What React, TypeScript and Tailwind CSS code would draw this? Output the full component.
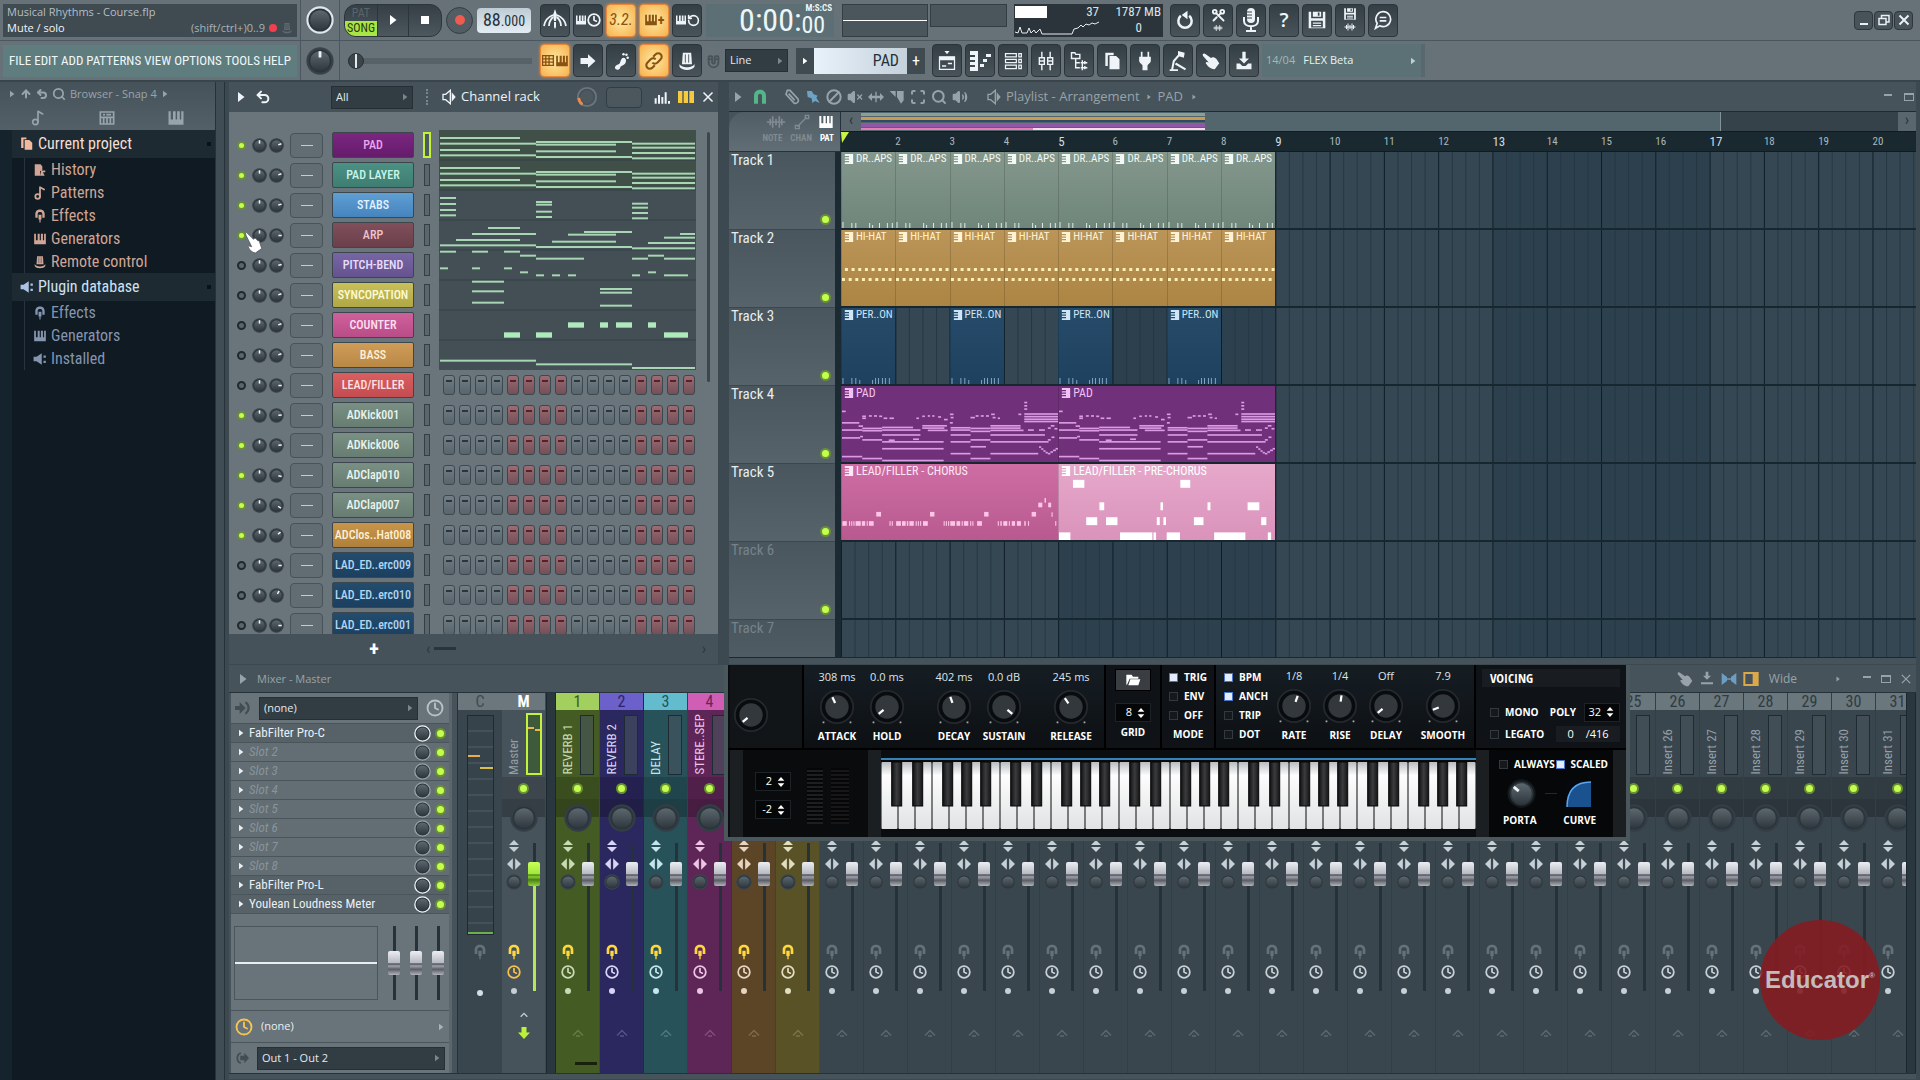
import type { ReactNode } from 'react';
import {
  ArrowUp,
  Ban,
  Clock,
  Magnet,
  Music2,
  RotateCcw,
  Scan,
  Scissors,
  Search,
  Undo2,
  Volume2,
  VolumeX,
} from 'lucide-react';

type Note = [number, number, number];
type Block = [number, number, number, number];

interface Channel {
  name: string;
  on: boolean;
  style: string;
  vol: number;
}

const channels: Channel[] = [
  { name: 'PAD', on: true, style: 'from-[#7a2780] to-[#661b6c] text-[#eba6f0]', vol: 70 },
  { name: 'PAD LAYER', on: true, style: 'from-[#4b9184] to-[#3f7d72] text-[#c9f5ea]', vol: 70 },
  { name: 'STABS', on: true, style: 'from-[#5f9fd4] to-[#4684bd] text-[#e2f2ff]', vol: 75 },
  { name: 'ARP', on: true, style: 'from-[#80505c] to-[#6b3f4a] text-[#eec3cb]', vol: 90 },
  { name: 'PITCH-BEND', on: false, style: 'from-[#7866a4] to-[#65528f] text-[#e7ddff]', vol: 80 },
  { name: 'SYNCOPATION', on: false, style: 'from-[#c9c05a] to-[#b0a745] text-[#fdfbd4]', vol: 70 },
  { name: 'COUNTER', on: false, style: 'from-[#cf609c] to-[#b94d88] text-[#ffe0f2]', vol: 70 },
  { name: 'BASS', on: false, style: 'from-[#cf9d58] to-[#b98845] text-[#fff0d6]', vol: 70 },
  { name: 'LEAD/FILLER', on: false, style: 'from-[#d95f60] to-[#c44c50] text-[#ffe0e0]', vol: 90 },
  { name: 'ADKick001', on: true, style: 'from-[#7b9085] to-[#687d72] text-[#eaf5ee]', vol: 85 },
  { name: 'ADKick006', on: true, style: 'from-[#7b9085] to-[#687d72] text-[#eaf5ee]', vol: 85 },
  { name: 'ADClap010', on: true, style: 'from-[#7b9085] to-[#687d72] text-[#eaf5ee]', vol: 100 },
  { name: 'ADClap007', on: true, style: 'from-[#7b9085] to-[#687d72] text-[#eaf5ee]', vol: 120 },
  { name: 'ADClos..Hat008', on: true, style: 'from-[#c8954a] to-[#b0803a] text-[#fff0d6]', vol: 50 },
  { name: 'LAD_ED..erc009', on: false, style: 'from-[#234c6e] to-[#1c3f5f] text-[#b4d6f0]', vol: 90 },
  { name: 'LAD_ED..erc010', on: false, style: 'from-[#234c6e] to-[#1c3f5f] text-[#b4d6f0]', vol: 30 },
  { name: 'LAD_ED..erc001', on: false, style: 'from-[#234c6e] to-[#1c3f5f] text-[#b4d6f0]', vol: 90 },
];

// start, end, y
const rackNotes: Note[] = [
  [660, 900, 174], [660, 948, 191], [660, 900, 210], [660, 948, 226],
  [948, 1236, 186], [948, 1188, 194], [948, 1188, 214], [948, 1236, 231],
  [1236, 1425, 191], [1236, 1425, 203], [1236, 1425, 219], [1236, 1425, 235],
  [660, 900, 264], [660, 948, 281], [660, 900, 300], [660, 948, 316],
  [948, 1236, 276], [948, 1188, 284], [948, 1188, 304], [948, 1236, 321],
  [1236, 1425, 281], [1236, 1425, 293], [1236, 1425, 309], [1236, 1425, 325],
  [660, 708, 354], [660, 708, 372], [660, 708, 390], [660, 708, 406],
  [948, 996, 366], [948, 996, 374], [948, 996, 395], [948, 996, 411],
  [1236, 1284, 371], [1236, 1284, 383], [1236, 1284, 399], [1236, 1284, 415],
  [804, 900, 444], [756, 948, 462], [708, 900, 480], [660, 948, 496],
  [1092, 1236, 456], [1044, 1188, 464], [996, 1188, 485], [948, 1236, 501],
  [1380, 1425, 462], [1332, 1425, 473], [1284, 1425, 489], [1236, 1425, 505],
  [660, 708, 515], [756, 804, 515], [852, 900, 515], [900, 948, 527], [948, 1092, 536],
  [660, 684, 565], [756, 780, 565], [852, 876, 565], [900, 924, 577], [948, 972, 586],
  [996, 1020, 586], [1044, 1068, 586], [1236, 1284, 536], [1284, 1332, 527],
  [1332, 1425, 536], [1236, 1260, 586], [1284, 1308, 577], [1332, 1404, 586],
  [756, 852, 605], [756, 852, 634], [756, 852, 668],
  [1140, 1236, 627], [1140, 1236, 638], [1140, 1236, 677],
  [660, 948, 842], [948, 1236, 853], [1236, 1425, 864],
];

const counterNotes: Note[] = [
  [852, 900, 765], [948, 996, 765], [1332, 1404, 765],
  [1044, 1092, 735], [1140, 1164, 735], [1188, 1236, 735], [1284, 1308, 735],
];

const padNotes: Note[] = [
  [327, 374, 128], [372, 384, 138], [382, 436, 145], [327, 382, 150], [382, 436, 152],
  [436, 520, 142], [436, 540, 150], [545, 612, 137], [545, 605, 144], [560, 614, 151],
  [327, 376, 174], [376, 384, 170], [382, 436, 180], [436, 540, 165], [436, 603, 186],
  [436, 603, 207], [327, 382, 231], [382, 436, 237], [436, 603, 243],
  [622, 676, 222], [622, 676, 186], [622, 676, 143], [622, 676, 150], [622, 676, 165],
  [676, 730, 237], [676, 718, 201], [676, 730, 180], [676, 730, 145], [676, 730, 154],
  [730, 812, 137], [730, 812, 144], [730, 820, 151], [730, 878, 165], [730, 888, 186],
  [730, 860, 222], [822, 914, 101], [822, 914, 109], [822, 914, 117], [822, 914, 124],
  [327, 337, 93], [382, 392, 108], [382, 392, 114], [400, 408, 107], [414, 422, 107],
  [428, 436, 108], [440, 450, 114], [456, 468, 114], [529, 536, 114], [545, 552, 108],
  [560, 566, 107], [572, 578, 107], [588, 596, 110], [604, 614, 118], [620, 630, 102],
  [622, 630, 112], [676, 688, 112], [690, 698, 107], [704, 712, 107], [718, 726, 107],
  [732, 742, 102], [736, 744, 112], [750, 756, 114], [806, 814, 102], [822, 830, 66],
  [822, 830, 76], [822, 830, 86], [454, 470, 181], [520, 536, 178], [620, 628, 128],
  [832, 848, 150], [862, 878, 150], [886, 894, 144], [894, 904, 137], [904, 912, 146],
  [862, 868, 202], [868, 874, 208], [874, 880, 214], [880, 886, 219], [886, 893, 222],
  [893, 900, 217], [900, 908, 212], [907, 914, 207], [886, 894, 180], [896, 904, 172],
];

const chorusBlocks: Block[] = [
  [328, 423, 12, 14], [346, 423, 3, 14], [352, 423, 3, 14], [358, 423, 3, 14], [364, 423, 14, 14],
  [381, 423, 9, 14], [394, 423, 3, 14], [400, 423, 13, 14], [420, 395, 13, 14],
  [456, 423, 3, 14], [462, 423, 3, 14], [474, 423, 13, 14], [490, 423, 10, 14], [503, 423, 4, 14],
  [510, 423, 12, 14], [527, 423, 3, 14], [533, 423, 3, 14], [539, 423, 3, 14], [547, 423, 13, 14],
  [566, 395, 12, 14], [603, 423, 3, 14], [609, 423, 3, 14], [615, 423, 3, 14], [621, 423, 13, 14],
  [638, 423, 10, 14], [652, 423, 3, 14], [658, 423, 12, 14], [675, 423, 3, 14], [681, 423, 3, 14],
  [694, 423, 13, 14], [713, 395, 12, 14], [750, 423, 3, 14], [757, 423, 4, 14], [765, 423, 11, 14],
  [780, 423, 3, 14], [788, 423, 9, 14], [802, 423, 11, 14], [822, 423, 4, 14], [832, 423, 3, 14],
  [842, 395, 12, 14], [860, 367, 11, 14], [877, 353, 4, 14], [887, 367, 8, 14], [896, 396, 3, 14],
  [906, 423, 3, 14],
];

const preChorusBlocks: Block[] = [
  [952, 298, 31, 24], [1244, 298, 27, 24], [1024, 366, 13, 24], [1190, 366, 7, 24],
  [1318, 366, 8, 24], [1427, 366, 32, 24], [988, 411, 30, 24], [1042, 411, 31, 24],
  [1180, 411, 8, 24], [1198, 411, 7, 24], [1281, 411, 26, 24], [1464, 411, 14, 24],
  [914, 457, 31, 23], [1080, 457, 88, 23], [1171, 457, 7, 23], [1207, 457, 36, 23],
  [1336, 457, 85, 23], [1482, 457, 9, 23],
];

const stripColors: Record<number, { head: string; body: string; icon: string }> = {
  1: { head: 'bg-[#a2cf5e] text-[#3c5a22]', body: 'bg-[#455b24]', icon: 'text-[#c9dbb4]' },
  2: { head: 'bg-[#6c60ca] text-[#2b2468]', body: 'bg-[#2b275f]', icon: 'text-[#d8d4f4]' },
  3: { head: 'bg-[#63bccd] text-[#24525c]', body: 'bg-[#27525a]', icon: 'text-[#c4e6ea]' },
  4: { head: 'bg-[#d15eb5] text-[#672459]', body: 'bg-[#5e2657]', icon: 'text-[#ecc4e4]' },
  5: { head: 'bg-[#cf8b45] text-[#5c3a18]', body: 'bg-[#5c4427]', icon: 'text-[#e6d4c0]' },
  6: { head: 'bg-[#c9bd4c] text-[#57511d]', body: 'bg-[#585226]', icon: 'text-[#e2dec0]' },
};
const stripNames = ['REVERB 1', 'REVERB 2', 'DELAY', 'STERE..SEP'];

function Glyph({ children, className = 'size-5' }: { children: ReactNode; className?: string }) {
  return (
    <svg viewBox="0 0 24 24" className={className} fill="currentColor" stroke="none" aria-hidden="true">
      {children}
    </svg>
  );
}

const Tri = ({ className = 'size-2' }: { className?: string }) => (
  <Glyph className={className}>
    <path d="M6 2 L19 12 L6 22Z" />
  </Glyph>
);

const PianoGlyph = ({ className }: { className?: string }) => (
  <Glyph className={className}>
    <path d="M2 3h3v11h3V3h3.500v11h2V3H17v11h2V3h3v18H2z" />
  </Glyph>
);

const PlugGlyph = ({ className }: { className?: string }) => (
  <Glyph className={className}>
    <path d="M12 1 C6 1 4 5 4 9 V15 H8 V9 C8 6 9.500 5 12 5 S16 6 16 9 V15 H20 V9 C20 5 18 1 12 1Z" />
    <path d="M9.500 10h5v8h-1.500v5h-2v-5H9.500z" />
  </Glyph>
);

const SpeakerGlyph = ({ className }: { className?: string }) => (
  <Glyph className={className}>
    <path d="M3 8h4l7-6v20l-7-6H3z" fill="none" stroke="currentColor" strokeWidth="2" />
    <path d="M16 5v14l6-7z" />
  </Glyph>
);

const PlugSpeaker = ({ className }: { className?: string }) => (
  <Glyph className={className}>
    <path d="M1 8h5l9-6v20l-9-6H1zM18 6h4v4h-4zM18 15h4v4h-4z" />
  </Glyph>
);

const KnobGlyph = ({ className }: { className?: string }) => (
  <Glyph className={className}>
    <path d="M7 2h10l1 14H6z" />
    <path d="M3 15c1 6 17 6 18 0v4c-2 5-16 5-18 0z" />
    <path d="M10 4v10M14 4v10" stroke="#39444b" strokeWidth="1" />
  </Glyph>
);

const HandGlyph = ({ className }: { className?: string }) => (
  <Glyph className={className}>
    <path d="M1 3c1-2 3-1 4 0l7 5c2-2 5-1 7 1l4 6-6 8c-4 0-7-2-9-4l-3-4c0-2 2-2 4-1l-7-8C1 5 1 4 1 3z" />
  </Glyph>
);

const WaveGlyph = ({ className }: { className?: string }) => (
  <Glyph className={className}>
    <path d="M1 12h22M5 8v8M8 5v14M12 8v8M16 5v14M19 8v8" fill="none" stroke="currentColor" strokeWidth="2" />
  </Glyph>
);

const DiskGlyph = ({ className }: { className?: string }) => (
  <Glyph className={className}>
    <path fillRule="evenodd" d="M2 2h3v8h14V2h3v20H2zM5 13v8h14v-8zM7 2h10v6H7zM13 3v4h2V3zM7 15h10v1.500H7zM7 18h10v1.500H7z" />
  </Glyph>
);

interface PickBoxProps {
  label: string;
  value: string;
  width: string;
  className?: string;
}

function PickBox({ label, value, width, className = '' }: PickBoxProps) {
  return (
    <span className={`relative flex h-[23px] shrink-0 items-center ${width} ${className}`}>
      <select
        aria-label={label}
        className="h-full w-full appearance-none border border-[#262f35] bg-[#323c43] px-1 font-['Open_Sans',sans-serif] text-[11px] text-[#e3eaed]"
      >
        <option>{value}</option>
      </select>
      <Tri className="pointer-events-none absolute right-1 size-2 text-[#7a868c]" />
    </span>
  );
}

interface ToolButtonProps {
  label: string;
  active?: boolean;
  children: ReactNode;
}

function ToolButton({ label, active, children }: ToolButtonProps) {
  return (
    <button
      type="button"
      aria-label={label}
      className={`flex h-[33px] w-[30px] shrink-0 items-center justify-center rounded-sm border ${
        active
          ? 'border-[#e9883a] bg-[radial-gradient(#ffe9a0,#f6b14e)] text-[#8a5212] shadow-[0_0_3px_#f08b35]'
          : 'border-[#2a343a] bg-gradient-to-b from-[#333e45] to-[#48535a] text-[#eef4f7]'
      }`}
    >
      {children}
    </button>
  );
}

function Knob({ size, angle, ring = '#39434a' }: { size: string; angle?: number; ring?: string }) {
  return (
    <svg viewBox="0 0 40 40" className={`${size} shrink-0`} aria-hidden="true">
      <defs>
        <linearGradient id="knobFace" x1="0" y1="0" x2="0" y2="1">
          <stop offset="0" stopColor="#5d686e" />
          <stop offset="1" stopColor="#2e383e" />
        </linearGradient>
      </defs>
      <circle cx="20" cy="20" r="18" fill="#2b353b" stroke={ring} strokeWidth="3" />
      <circle cx="20" cy="20" r="14" fill="url(#knobFace)" />
      {angle !== undefined && (
        <path d="M20 6v9" stroke="#eef2f4" strokeWidth="4" transform={`rotate(${angle} 20 20)`} />
      )}
    </svg>
  );
}

function Led({ label, on = true, size = 'size-[11px]' }: { label: string; on?: boolean; size?: string }) {
  return (
    <input
      type="checkbox"
      aria-label={label}
      defaultChecked={on}
      className={`shrink-0 appearance-none rounded-full border-2 border-[#1f292e] bg-[#5b666c] checked:border-[#6a8f35] checked:bg-[#c3ff4f] ${size}`}
    />
  );
}

function TopBar() {
  const menus = ['FILE', 'EDIT', 'ADD', 'PATTERNS', 'VIEW', 'OPTIONS', 'TOOLS', 'HELP'];
  return (
    <header className="border-b-2 border-[#39454b] bg-[#667178]">
      <div className="flex h-[41px] items-center border-b border-[#4b575e]">
        <div className="w-[300px] shrink-0 p-[3px]">
          <div className="h-[33px] bg-[#3f4a51] px-1 font-['Open_Sans',sans-serif] text-[11px] leading-4">
            <p className="text-[#b5bfc5]">Musical Rhythms - Course.flp</p>
            <div className="flex items-center">
              <span className="text-[#f1f5f7]">Mute / solo</span>
              <span className="ml-auto text-[#a9b4ba]">(shift/ctrl+)0..9</span>
              <span className="mx-1 size-2 rounded-full bg-[#ef4050]" />
              <KnobGlyph className="size-3 text-[#5d686f]" />
            </div>
          </div>
        </div>
        <div className="flex h-full w-[40px] shrink-0 items-center justify-center border-x border-[#4b575e]">
          <Knob size="size-[28px]" ring="#dfe7eb" />
        </div>
        <div className="flex w-[200px] shrink-0 items-center pl-1">
          <div className="flex h-[33px] w-[98px] overflow-hidden rounded-xl border border-[#2b353b] bg-gradient-to-b from-[#353f45] to-[#4c575e]">
            <div className="w-8 text-center text-xs">
              <button type="button" className="block h-4 w-full text-[#59646b]">PAT</button>
              <button type="button" className="block h-[15px] w-full bg-[#a8e645] leading-[15px] text-[#26380c]">SONG</button>
            </div>
            <button type="button" aria-label="Play" className="flex w-8 items-center justify-center border-x border-[#2b353b] text-white">
              <Tri className="size-3" />
            </button>
            <button type="button" aria-label="Stop" className="flex flex-1 items-center justify-center">
              <span className="size-2 bg-white" />
            </button>
          </div>
          <button type="button" aria-label="Record" className="ml-1 flex size-[27px] items-center justify-center rounded-full border border-[#333d43] bg-[#515c63]">
            <span className="size-[10px] rounded-full bg-[#ee5b4f]" />
          </button>
          <button type="button" className="ml-1 h-[25px] w-[54px] rounded bg-gradient-to-b from-[#bfccd5] to-[#e3ecf3] text-lg leading-6 text-[#26323a]">
            88<span className="text-sm">.000</span>
          </button>
        </div>
        <div className="flex gap-[3px]">
          <ToolButton label="Metronome">
            <Glyph className="size-6">
              <path d="M12 1l2 6-1 6h-2l-1-6zM11 14h2v5l-1 2-1-2z" />
              <path d="M1 18c1-6 4-9 9-11M23 18c-1-6-4-9-9-11M6 18c0-4 2-7 4-9M18 18c0-4-2-7-4-9" fill="none" stroke="currentColor" strokeWidth="1.800" />
            </Glyph>
          </ToolButton>
          <ToolButton label="Wait for input">
            <PianoGlyph className="size-3" />
            <Clock className="size-[14px]" strokeWidth={3} />
          </ToolButton>
          <ToolButton label="Countdown" active>
            <span className="text-base italic">3.2.</span>
          </ToolButton>
          <ToolButton label="Overdub" active>
            <PianoGlyph className="size-[14px]" />
            <span className="text-sm font-bold">+</span>
          </ToolButton>
          <ToolButton label="Loop recording">
            <PianoGlyph className="size-3" />
            <RotateCcw className="size-[13px]" strokeWidth={3} />
          </ToolButton>
        </div>
        <div className="ml-1 flex h-[33px] w-[128px] shrink-0 justify-end bg-[#5b6f74] pr-[2px] text-[#edf6f7]">
          <span className="text-[32px] leading-8">0:00:</span>
          <span className="flex flex-col">
            <span className="pl-1 text-[9px] leading-[9px] font-bold">M:S:CS</span>
            <span className="text-2xl leading-6">00</span>
          </span>
        </div>
        <div className="ml-2 flex h-[33px] w-[86px] shrink-0 items-center border border-[#333e44] bg-[#4a555c]">
          <div className="h-px w-full bg-white" />
        </div>
        <div className="ml-[2px] h-[33px] w-[77px] shrink-0">
          <div className="h-[23px] border border-[#333e44] bg-[#4a555c]" />
        </div>
        <div className="ml-[7px] grid h-[33px] w-[149px] shrink-0 grid-cols-[84px_1fr] bg-[#2b343b] px-px text-[13px] leading-4 text-[#dbe4e9]">
          <div className="flex h-4 items-center justify-between">
            <div className="h-3 w-8 bg-white" />
            <span>37</span>
          </div>
          <span className="pr-px text-right">1787 MB</span>
          <svg viewBox="0 0 84 16" className="h-4 w-[84px]" fill="none" stroke="#e8eef1" aria-hidden="true">
            <path d="M0 12l3 1 2-6 2 6h5l2-5 2 5 3-3 2 3 4-4 2 5h30l2-5 4-1 3-3 2 2 3-3 3 1 3-2 3 1 4-2" />
          </svg>
          <span className="pr-5 text-right">0</span>
        </div>
        <div className="ml-[7px] flex gap-[3px]">
          <ToolButton label="Undo">
            <Glyph>
              <path d="M7 7a8 8 0 1 0 10 0" fill="none" stroke="currentColor" strokeWidth="3" />
              <path d="M8 6l7-5v10z" />
            </Glyph>
          </ToolButton>
          <ToolButton label="Cut">
            <span className="flex flex-col items-center">
              <Scissors className="size-[15px] rotate-90" strokeWidth={3} />
              <WaveGlyph className="size-[10px]" />
            </span>
          </ToolButton>
          <ToolButton label="Audio recording">
            <Glyph className="size-6">
              <rect x="8" y="0" width="8" height="15" rx="4" />
              <path d="M5 9v4c0 7 14 7 14 0V9M12 18v4M7 23h10" fill="none" stroke="currentColor" strokeWidth="2" />
              <path d="M8 4h5M8 7h5M8 10h5" stroke="#39444b" strokeWidth="1" />
            </Glyph>
          </ToolButton>
          <ToolButton label="Help"><span className="font-['Open_Sans',sans-serif] text-xl font-semibold">?</span></ToolButton>
          <ToolButton label="Save"><DiskGlyph className="size-5" /></ToolButton>
          <ToolButton label="Save new version">
            <span className="flex flex-col items-center">
              <DiskGlyph className="size-[14px]" />
              <WaveGlyph className="size-3" />
            </span>
          </ToolButton>
          <ToolButton label="Project info">
            <Glyph>
              <path d="M12 2a9 9 0 1 1-4 17l-5 3 2-6A9 9 0 0 1 12 2zM8 9h8M8 13h8" fill="none" stroke="currentColor" strokeWidth="2" />
            </Glyph>
          </ToolButton>
        </div>
        <div className="mr-[7px] ml-auto flex gap-px text-[#e9f0f3]">
          <button type="button" aria-label="Minimize" className="flex size-[19px] items-end justify-center rounded-sm border border-[#2d373d] bg-[#475259] pb-1">
            <span className="h-[2px] w-2 bg-current" />
          </button>
          <button type="button" aria-label="Restore" className="flex size-[19px] items-center justify-center rounded-sm border border-[#2d373d] bg-[#475259]">
            <Glyph className="size-3">
              <path d="M2 9h14v12H2zM7 8V3h15v13h-5" fill="none" stroke="currentColor" strokeWidth="3" />
            </Glyph>
          </button>
          <button type="button" aria-label="Close" className="flex size-[19px] items-center justify-center rounded-sm border border-[#2d373d] bg-[#475259]">
            <Glyph className="size-3">
              <path d="M3 3l18 18M21 3L3 21" stroke="currentColor" strokeWidth="4" />
            </Glyph>
          </button>
        </div>
      </div>
      <div className="flex h-[39px] items-center">
        <div className="w-[300px] shrink-0 p-[3px]">
          <nav className="flex h-[32px] items-center justify-between bg-[#5f7c7f] px-[6px] text-[13px] text-[#eef8f8]">
            {menus.map((menu) => (
              <button key={menu} type="button">{menu}</button>
            ))}
          </nav>
        </div>
        <div className="flex h-full w-[40px] shrink-0 items-center justify-center border-x border-[#4b575e]">
          <Knob size="size-[28px]" angle={0} />
        </div>
        <div className="flex w-[200px] shrink-0 items-center px-2">
          <input
            type="range"
            aria-label="Song position"
            defaultValue={0}
            className="h-4 w-full appearance-none bg-[linear-gradient(#566168,#566168)] bg-[length:100%_6px] bg-center bg-no-repeat [&::-webkit-slider-thumb]:h-4 [&::-webkit-slider-thumb]:w-4 [&::-webkit-slider-thumb]:appearance-none [&::-webkit-slider-thumb]:rounded-full [&::-webkit-slider-thumb]:border [&::-webkit-slider-thumb]:border-[#242e34] [&::-webkit-slider-thumb]:bg-[linear-gradient(90deg,#3b464c_44%,#e8e8e8_44%,#e8e8e8_56%,#3b464c_56%)]"
          />
        </div>
        <div className="flex gap-[3px]">
          <ToolButton label="Typing keyboard to piano" active>
            <Glyph className="size-[13px]">
              <path d="M1 3h20v18H1zM1 9h20M1 15h20M7 3v18M13 3v18" fill="none" stroke="currentColor" strokeWidth="2.500" />
            </Glyph>
            <PianoGlyph className="size-[14px]" />
          </ToolButton>
          <ToolButton label="Auto scroll">
            <Glyph className="size-[18px]"><path d="M2 8h10V3l10 9-10 9v-5H2z" /></Glyph>
          </ToolButton>
          <ToolButton label="Step edit">
            <Glyph>
              <path d="M15 8c3 0 4 4 2 7s-5 2-6 5-5 3-6 1 1-4 4-5 2-8 6-8z" />
              <circle cx="15" cy="4" r="1.500" />
              <circle cx="18.500" cy="4.500" r="1.500" />
              <circle cx="20" cy="8" r="1.500" />
            </Glyph>
          </ToolButton>
          <ToolButton label="Note grouping" active>
            <Glyph>
              <path d="M10 14a4 4 0 0 0 6 0l4-4a4 4 0 0 0-6-6l-3 3M14 10a4 4 0 0 0-6 0l-4 4a4 4 0 0 0 6 6l3-3" fill="none" stroke="currentColor" strokeWidth="2.500" />
            </Glyph>
          </ToolButton>
          <ToolButton label="Multilink controllers"><KnobGlyph className="size-5" /></ToolButton>
        </div>
        <Magnet className="mx-1 size-[15px] shrink-0 rotate-[135deg] text-[#485359]" strokeWidth={3} />
        <PickBox label="Snap" value="Line" width="w-[63px]" />
        <div className="ml-2 flex h-[26px] shrink-0">
          <button type="button" aria-label="Pattern menu" className="flex w-[18px] items-center justify-center bg-[#3f4a51] text-white">
            <Tri />
          </button>
          <label htmlFor="pattern" className="sr-only">Pattern</label>
          <input id="pattern" defaultValue="PAD" className="w-[93px] bg-gradient-to-r from-[#e8f2fb] to-[#c5d2db] pr-2 text-right text-base text-[#26323a]" />
          <button type="button" aria-label="Add pattern" className="w-[18px] bg-[#3f4a51] text-base text-white">+</button>
        </div>
        <div className="ml-[7px] flex gap-[3px]">
          <ToolButton label="Playlist">
            <Glyph>
              <path d="M3 7h18v15H3z" fill="none" stroke="currentColor" strokeWidth="1.500" />
              <path d="M9 0h6l-3 4zM3 7h18v4H3zM6 17h5v2H6zM13 14h5v2h-5z" />
            </Glyph>
          </ToolButton>
          <ToolButton label="Piano roll">
            <Glyph className="size-6">
              <path d="M2 2h8v20H2v-4h5v-2H2v-3h5v-2H2V8h5V6H2zM12 15h4v3h-4zM15 10h4v3h-4zM18 5h5v3h-5z" />
            </Glyph>
          </ToolButton>
          <ToolButton label="Channel rack">
            <Glyph>
              <path d="M3 3h13v4H3zM3 10h13v4H3zM3 17h13v4H3zM19 3h3v4h-3zM19 10h3v4h-3zM19 17h3v4h-3z" fill="none" stroke="currentColor" strokeWidth="1.500" />
            </Glyph>
          </ToolButton>
          <ToolButton label="Mixer">
            <Glyph>
              <path d="M7 1v7M17 1v7M7 16v7M17 16v7M4 8h6v8H4zM14 8h6v8h-6zM4 12h6M14 12h6" fill="none" stroke="currentColor" strokeWidth="1.700" />
            </Glyph>
          </ToolButton>
          <ToolButton label="Browser">
            <Glyph>
              <path d="M3 2h4l1 2h5v5H3zM8 9v11h5M8 14h5M14 14h8M14 20h8M16 11v6M19 12v4M16 17v6M19 18v4" fill="none" stroke="currentColor" strokeWidth="1.700" />
            </Glyph>
          </ToolButton>
          <ToolButton label="Project picker">
            <Glyph>
              <path d="M4 2h10v3H7v13H4zM9 6h8l4 4v12H9z" />
            </Glyph>
          </ToolButton>
          <ToolButton label="Plugins">
            <Glyph>
              <path d="M7 1h2v6h6V1h2v6h2v5c0 2-2 3-4 5v6H9v-6c-2-2-4-3-4-5V7h2z" />
            </Glyph>
          </ToolButton>
          <ToolButton label="Tempo tapper">
            <Glyph>
              <path d="M2 23h10M5 22L7 12L14 4M9 15l12 7" fill="none" stroke="currentColor" strokeWidth="2.500" />
              <path d="M12 0l8 2-1 6-7-2z" />
            </Glyph>
          </ToolButton>
          <ToolButton label="Touch controllers"><HandGlyph className="size-[18px]" /></ToolButton>
          <ToolButton label="Update">
            <Glyph>
              <path d="M10 1h4v8h4l-6 6-6-6h4zM3 15h4l3 3h4l3-3h4v7H3z" />
            </Glyph>
          </ToolButton>
        </div>
        <div className="ml-[3px] flex h-[33px] w-[163px] shrink-0 items-center gap-2 border-r-4 border-[#59686d] bg-[#5b7175] px-1 font-['Open_Sans',sans-serif] text-[11px]">
          <span className="text-[#a3b7ba]">14/04</span>
          <a href="#flex" className="text-[#e8f3f3]">FLEX Beta</a>
          <Tri className="ml-auto size-2 text-[#bcd0d2]" />
        </div>
      </div>
    </header>
  );
}

function Browser() {
  const project = [
    { name: 'History', icon: <Glyph className="size-[14px]"><path d="M3 2h10l3 4v6l-4 2v8H3zM14 13h7v3h-4l3 6h-8z" /></Glyph> },
    { name: 'Patterns', icon: <Music2 className="size-[14px]" strokeWidth={3} /> },
    { name: 'Effects', icon: <PlugGlyph className="size-[14px]" /> },
    { name: 'Generators', icon: <PianoGlyph className="size-[14px]" /> },
    { name: 'Remote control', icon: <KnobGlyph className="size-[14px]" /> },
  ];
  const plugins = [
    { name: 'Effects', icon: <PlugGlyph className="size-[14px]" /> },
    { name: 'Generators', icon: <PianoGlyph className="size-[14px]" /> },
    { name: 'Installed', icon: <PlugSpeaker className="size-[14px]" /> },
  ];
  return (
    <aside className="flex w-[216px] shrink-0 flex-col border-r border-[#26323a] bg-[#14232c] text-base">
      <div className="bg-gradient-to-b from-[#465259] to-[#536067] text-[#98a4aa]">
        <div className="flex h-6 items-center gap-1 pl-2 font-['Open_Sans',sans-serif] text-[11px]">
          <Tri />
          <ArrowUp className="size-3" strokeWidth={4} />
          <Undo2 className="size-3" strokeWidth={4} />
          <Search className="size-[14px]" strokeWidth={3} />
          <span>Browser - Snap 4</span>
          <Tri />
        </div>
        <div className="flex h-6 items-center justify-between px-[30px]">
          <Music2 className="size-4" strokeWidth={2.5} />
          <Glyph className="size-4">
            <path d="M2 3h20v18H2zM2 11h20M7 11v10M12 11v10M17 11v10M6 7h3M11 7h7" fill="none" stroke="currentColor" strokeWidth="2.500" />
          </Glyph>
          <PianoGlyph className="size-[18px]" />
        </div>
      </div>
      <div className="ml-3 flex-1 bg-[#0f1a22]">
        <h2 className="flex h-7 items-center gap-1 bg-[#1e2a32] pl-2 text-[#f3ded3]">
          <Glyph className="size-[14px] text-[#f0b9a0]"><path d="M2 1h9v3H6v15H2zM8 5h8l5 5v12H8z" /></Glyph>
          Current project
          <span className="mr-1 ml-auto size-1 bg-[#0a1218]" />
        </h2>
        <ul className="ml-3 border-l border-[#26353f] text-[#d1a596]">
          {project.map((item) => (
            <li key={item.name} className="flex h-[23px] items-center gap-1 pl-2">
              {item.icon}
              {item.name}
            </li>
          ))}
        </ul>
        <h2 className="flex h-7 items-center gap-1 bg-[#1e2a32] pl-2 text-[#cfe2f3]">
          <PlugSpeaker className="size-[14px] text-[#a9c4e6]" />
          Plugin database
          <span className="mr-1 ml-auto size-1 bg-[#0a1218]" />
        </h2>
        <ul className="ml-3 border-l border-[#26353f] text-[#8595b0]">
          {plugins.map((item) => (
            <li key={item.name} className="flex h-[23px] items-center gap-1 pl-2">
              {item.icon}
              {item.name}
            </li>
          ))}
        </ul>
      </div>
    </aside>
  );
}

function RackNotes() {
  return (
    <svg viewBox="657 150 771 720" className="h-[240px] w-[257px] bg-[#434f55]" aria-hidden="true">
      <rect x="657" y="150" width="771" height="180" fill="#405048" />
      {[1, 2, 3, 4, 5, 6, 7].map((row) => (
        <rect key={row} x="657" y={148 + row * 90} width="771" height="4" fill="#37444a" />
      ))}
      {rackNotes.map(([start, end, y]) => (
        <rect key={`${start}-${y}`} x={start} y={y - 3} width={end - start} height="6" fill="#a8d5b4" />
      ))}
      {counterNotes.map(([start, end, y]) => (
        <rect key={`${start}-${y}`} x={start} y={y - 8} width={end - start} height="16" fill="#aeeabc" />
      ))}
    </svg>
  );
}

function ChannelRow({ channel, index }: { channel: Channel; index: number }) {
  return (
    <div className="flex h-[30px] items-center">
      <Led label={`Mute ${channel.name}`} on={channel.on} size="size-[9px]" />
      <div className="ml-[6px] flex gap-[2px]">
        <Knob size="size-[15px]" angle={0} />
        <Knob size="size-[15px]" angle={channel.vol} />
      </div>
      <button type="button" aria-label={`Mixer track for ${channel.name}`} className="ml-[6px] flex h-[25px] w-[33px] items-center justify-center rounded-sm border border-[#485359] bg-[#626d73]">
        <span className="h-px w-3 bg-[#c3ccd1]" />
      </button>
      <button type="button" className={`ml-[9px] h-[26px] w-[82px] rounded-xs border border-[#3c474d] bg-gradient-to-b text-xs font-medium whitespace-nowrap ${channel.style}`}>
        {channel.name}
      </button>
      <span className={index === 0 ? 'ml-[9px] h-[26px] w-2 border-2 border-[#c2f23c] bg-[#4f5a60]' : 'mr-px ml-[10px] h-[22px] w-[6px] border border-[#343f45] bg-[#5b666c]'} />
      {index > 7 && (
        <div className="ml-3 flex gap-1">
          {Array.from({ length: 16 }, (_, step) => (
            <button
              key={step}
              type="button"
              aria-label={`Step ${step + 1}`}
              className={`flex h-5 w-3 justify-center rounded-[3px] border border-[#3d484e] bg-gradient-to-b pt-1 ${
                Math.floor(step / 4) % 2 ? 'from-[#9b6d74] to-[#744f57]' : 'from-[#737f86] to-[#58646b]'
              }`}
            >
              <span className={`h-[2px] w-[6px] ${Math.floor(step / 4) % 2 ? 'bg-[#5a1f28]' : 'bg-[#2b363c]'}`} />
            </button>
          ))}
        </div>
      )}
    </div>
  );
}

function ChannelRack() {
  return (
    <section className="flex w-[497px] shrink-0 flex-col border-x-4 border-[#3d4950] bg-[#465259]">
      <div className="flex h-[30px] shrink-0 items-center pl-[6px] text-[#eef4f7]">
        <Tri className="size-3" />
        <Undo2 className="ml-2 size-4" strokeWidth={3} />
        <PickBox label="Channel filter" value="All" width="w-[82px]" className="ml-[60px]" />
        <span className="mx-[13px] h-4 border-l-2 border-dotted border-[#7a868c]" />
        <SpeakerGlyph className="size-4" />
        <h2 className="ml-1 font-['Open_Sans',sans-serif] text-[13px]">Channel rack</h2>
        <div className="ml-auto flex items-center gap-2 pr-1">
          <svg viewBox="0 0 24 24" className="size-[22px]" aria-hidden="true">
            <circle cx="12" cy="12" r="10" fill="none" stroke="#6a757b" strokeWidth="2" />
            <circle cx="12" cy="12" r="7" fill="#4d585f" />
            <path d="M3 13a9 9 0 0 0 4 7" fill="none" stroke="#f08a4a" strokeWidth="3" />
          </svg>
          <span className="h-[21px] w-9 rounded border border-[#323d43] bg-[#4b565d]" />
          <Glyph className="ml-1 size-4">
            <path d="M1 14h3v8H1zM6 9h3v13H6zM11 12h3v10h-3zM16 5h3v17h-3zM21 18h3v4h-3z" />
          </Glyph>
          <Glyph className="size-4 text-[#f6ca3b]">
            <path d="M0 3h6.500v18H0zM8.500 3H15v18H8.500zM17 3h7v18h-7z" />
          </Glyph>
          <button type="button" aria-label="Close channel rack">
            <Glyph className="size-3"><path d="M3 3l18 18M21 3L3 21" stroke="currentColor" strokeWidth="3" /></Glyph>
          </button>
        </div>
      </div>
      <div className="relative h-[522px] overflow-hidden bg-[#6a757b] pt-[18px] pl-2">
        {channels.map((channel, index) => (
          <ChannelRow key={channel.name} channel={channel} index={index} />
        ))}
        <div className="absolute top-[18px] left-[210px]">
          <RackNotes />
        </div>
        <div className="absolute top-[20px] right-2 h-[250px] w-[3px] rounded bg-[#3b464d]" />
        <svg viewBox="0 0 20 24" className="absolute top-[120px] left-[15px] h-[22px] w-[19px]" fill="#fff" stroke="#5a6066" aria-hidden="true">
          <path d="M1 1c1-1 2 0 3 1l6 6c1-2 3-1 4 1 1 0 3 1 3 3l2 6-7 5c-4-1-6-3-8-7 0-1 1-1 4 0L2 4z" />
        </svg>
      </div>
      <div className="flex h-[29px] items-center text-[#48545a]">
        <button type="button" aria-label="Add channel" className="ml-[137px] w-4 text-xl leading-5 font-bold text-white">+</button>
        <span className="ml-11 text-[#2b363c]">‹</span>
        <div className="ml-1 h-[3px] w-[22px] bg-[#2a343a]" />
        <span className="mr-3 ml-auto text-[#2b363c]">›</span>
      </div>
    </section>
  );
}

interface ClipProps {
  name: string;
  style: string;
  wide?: boolean;
  children?: ReactNode;
}

function Clip({ name, style, wide, children }: ClipProps) {
  return (
    <div className={`flex min-w-0 flex-col overflow-hidden border-l border-black/15 ${wide ? 'col-span-4 text-xs' : 'text-[11px]'} ${style}`}>
      <div className="flex h-[14px] shrink-0 items-center gap-[2px] pl-[2px] leading-[14px] whitespace-nowrap">
        <Glyph className="size-[10px] shrink-0">
          <path d="M2 0h20v24H2v-4h10v-3H2v-3h10v-3H2V8h10V5H2z" />
        </Glyph>
        {name}
      </div>
      {children}
    </div>
  );
}

function ClipSvg({ box, children }: { box: string; children: ReactNode }) {
  return (
    <svg viewBox={box} preserveAspectRatio="none" className="-mt-[14px] h-[76px] w-full" fill="currentColor" aria-hidden="true">
      {children}
    </svg>
  );
}

const eight = [0, 1, 2, 3, 4, 5, 6, 7];

function Playlist() {
  const tools = [
    <Glyph key="draw" className="size-4"><path d="M5 2l4 0 12 13c2 4-2 8-6 6L3 8zM7 7l9 10" fill="none" stroke="currentColor" strokeWidth="2.500" /></Glyph>,
    <Glyph key="paint" className="size-4 text-[#6fa3c4]"><path d="M3 3h7l3 5 6 2-2 3 5 8-7-3-4 3-1-7-6-2z" /></Glyph>,
    <Ban key="delete" className="size-4 rotate-90" strokeWidth={3} />,
    <VolumeX key="mute" className="size-4 fill-current" />,
    <Glyph key="slip" className="size-4"><path d="M0 12l6-6v4h12V6l6 6-6 6v-4H6v4zM11 4h2v16h-2z" /></Glyph>,
    <Glyph key="slice" className="size-4"><path d="M1 3h9v9zM12 3h10v14l-4 5-6-10z" /></Glyph>,
    <Scan key="select" className="size-4" strokeWidth={3} />,
    <Search key="zoom" className="size-4" strokeWidth={3} />,
    <Volume2 key="play" className="size-4 fill-current" />,
  ];
  return (
    <section className="flex min-w-0 flex-1 flex-col border-r-4 border-l-[7px] border-[#3d4950] bg-[#47535a]">
      <div className="flex h-[29px] shrink-0 items-center pl-[3px] text-[#97a3a9]">
        <Tri className="size-3" />
        <Glyph className="ml-2 size-4 text-[#53b588]"><path d="M3 22V10C3-2 21-2 21 10v12h-6V10c0-4-6-4-6 0v12z" /></Glyph>
        <div className="ml-4 flex gap-[5px]">{tools}</div>
        <SpeakerGlyph className="ml-[18px] size-4" />
        <h2 className="ml-1 font-['Open_Sans',sans-serif] text-[13px]">Playlist - Arrangement</h2>
        <Tri className="mx-[6px] size-[6px]" />
        <span className="font-['Open_Sans',sans-serif] text-[13px]">PAD</span>
        <Tri className="ml-2 size-[6px]" />
        <div className="mr-[2px] ml-auto flex items-center gap-3">
          <span className="mb-1 h-[2px] w-2 bg-current" />
          <span className="h-2 w-[10px] border border-t-2 border-current" />
        </div>
      </div>
      <div className="flex border-t border-[#1f2b31]">
        <div className="h-10 w-[112px] shrink-0 rounded-tl-2xl border-r border-b border-[#26323a] bg-gradient-to-b from-[#515d64] to-[#626e75] px-[6px] text-[#7f8b91]">
          <div className="flex h-5 items-center justify-end gap-2">
            <WaveGlyph className="size-5" />
            <Glyph className="size-4"><path d="M5 19L19 5M2 17h6v5H2zM17 2h5v5h-5z" fill="none" stroke="currentColor" strokeWidth="2" /></Glyph>
            <PianoGlyph className="size-4 text-white" />
          </div>
          <div className="flex justify-end gap-2 text-[9px] font-bold">
            <span>NOTE</span>
            <span>CHAN</span>
            <span className="text-white">PAT</span>
          </div>
        </div>
        <div className="min-w-0 flex-1">
          <div className="flex h-[19px] bg-[#36424a]">
            <div className="w-5 shrink-0 bg-[#59666d] text-center leading-4 text-[#26323a]">‹</div>
            <div className="w-[80%] border-r border-[#82949a] bg-[#53666d]">
              <div className="flex h-full w-[40%] flex-col justify-evenly">
                <div className="h-[3px] bg-[#8ba094]" />
                <div className="h-[3px] bg-[#c99a52]" />
                <div className="h-[2px] bg-[#2c4d6a]" />
                <div className="h-[4px] bg-[#8f57a8]" />
                <div className="h-[2px] bg-gradient-to-r from-[#e57db7] from-50% to-[#fbd8ea] to-50%" />
              </div>
            </div>
            <div className="ml-auto w-[18px] shrink-0 bg-[#59666d] text-center leading-4 text-[#26323a]">›</div>
          </div>
          <div className="h-[21px] overflow-hidden border-y border-[#101c22] bg-[#1a2930]">
            <div className="grid h-full w-[101%] grid-cols-20 text-[11px] leading-5 text-[#a9b8be]">
              {Array.from({ length: 20 }, (_, bar) =>
                bar === 0 ? (
                  <span key={bar}>
                    <Glyph className="size-3 text-[#c8f545]"><path d="M0 0h16L2 22z" /></Glyph>
                  </span>
                ) : (
                  <span key={bar} className={bar % 4 === 0 ? 'text-[13px] text-[#cfdce1]' : ''}>
                    {bar + 1}
                  </span>
                ),
              )}
            </div>
          </div>
        </div>
      </div>
      <div className="flex h-[505px] overflow-hidden">
        <div className="w-[112px] shrink-0 border-r-[6px] border-[#1c2b33] bg-[#515d64]">
          {[1, 2, 3, 4, 5, 6, 7].map((track) => (
            <div key={track} className="flex h-[78px] flex-col justify-between border-b border-[#3c484f] bg-gradient-to-b from-[#4a565d] to-[#57636a] pr-[4px] pb-1 pl-[2px]">
              <span className={track < 6 ? 'text-[15px] leading-4 text-[#e7edf0]' : 'text-[15px] leading-4 text-[#76828a]'}>Track {track}</span>
              <span className="flex self-end">
                <Led label={`Mute track ${track}`} />
              </span>
            </div>
          ))}
        </div>
        <div className="min-w-0 flex-1 overflow-hidden">
          <div className="relative w-[101%]">
            <svg width="100%" height="546" className="block" aria-hidden="true">
              <rect width="100%" height="546" fill="#354753" />
              <rect x="20%" width="20%" height="546" fill="#2c404d" />
              <rect x="60%" width="20%" height="546" fill="#2c404d" />
              {Array.from({ length: 80 }, (_, beat) => (
                <rect key={beat} x={`${beat * 1.25}%`} width="1" height="546" fill={beat % 4 ? '#263844' : '#0f1f29'} />
              ))}
              {[1, 2, 3, 4, 5, 6].map((row) => (
                <rect key={row} y={row * 78 - 2} width="100%" height="2" fill="#172730" />
              ))}
            </svg>
            <div className="absolute inset-0 grid auto-rows-[76px] grid-cols-20 gap-y-[2px]">
              {eight.map((bar) => (
                <Clip key={bar} name="DR..APS" style="bg-gradient-to-b from-[#84978c] to-[#70867b] text-[#f3faf6]">
                  <ClipSvg box="0 0 54 76">
                    <path d="M1 70v6M10 71v5M14 71v5M28 71v5M31 73v3M38 71v5M46 71v5M51 71v5" stroke="#dcebe2" />
                  </ClipSvg>
                </Clip>
              ))}
              <div className="col-span-12" />
              {eight.map((bar) => (
                <Clip key={bar} name="HI-HAT" style="bg-gradient-to-b from-[#bb9558] to-[#ac8544] text-[#fff3d6]">
                  <ClipSvg box="0 0 54 76">
                    {eight.map((hit) => (
                      <path key={hit} d={`M${3 + hit * 6.75} 38h3v3h-3zM${hit * 6.75} 48h3v3h-3z`} fill="#fff0b8" />
                    ))}
                  </ClipSvg>
                </Clip>
              ))}
              <div className="col-span-12" />
              {[0, 1, 2, 3].map((pair) => (
                <div key={pair} className="col-span-2 grid grid-cols-2">
                  <Clip name="PER..ON" style="bg-gradient-to-b from-[#264b69] to-[#1f4160] text-[#cfe6f6]">
                    <ClipSvg box="0 0 54 76">
                      <path d="M1 70v6M10 70v6M14 70v6M18 72v4M31 72v4M34 70v6M37 70v6M41 70v6M44 70v6M48 70v6" stroke="#7fa6c4" />
                    </ClipSvg>
                  </Clip>
                </div>
              ))}
              <div className="col-span-12" />
              {[0, 1].map((half) => (
                <Clip key={half} name="PAD" wide style="bg-[#70317a] text-[#f1c3f5]">
                  <ClipSvg box="327 15 587 232">
                    {padNotes.map(([start, end, y]) => (
                      <rect key={`${start}-${y}`} x={start} y={y - 3} width={end - start} height="5" fill="#dd9be6" />
                    ))}
                  </ClipSvg>
                </Clip>
              ))}
              <div className="col-span-12" />
              <Clip name="LEAD/FILLER - CHORUS" wide style="bg-gradient-to-b from-[#cd6da3] to-[#b85a90] text-[#ffe6f4]">
                <ClipSvg box="327 250 587 230">
                  {chorusBlocks.map(([x, y, w, h]) => (
                    <rect key={`${x}-${y}`} x={x} y={y} width={w} height={h} fill="#ffc4e6" />
                  ))}
                </ClipSvg>
              </Clip>
              <Clip name="LEAD/FILLER - PRE-CHORUS" wide style="bg-gradient-to-b from-[#e6a8cb] to-[#da93bb] text-white">
                <ClipSvg box="914 250 588 230">
                  {preChorusBlocks.map(([x, y, w, h]) => (
                    <rect key={`${x}-${y}`} x={x} y={y} width={w} height={h} fill="#ffffff" />
                  ))}
                </ClipSvg>
              </Clip>
            </div>
          </div>
        </div>
      </div>
      <div className="h-[7px] border-t border-[#1c282e]" />
    </section>
  );
}

interface FaderProps {
  label: string;
  value: number;
  size: string;
  green?: boolean;
}

function Fader({ label, value, size, green }: FaderProps) {
  return (
    <input
      type="range"
      aria-label={label}
      defaultValue={value}
      className={`appearance-none bg-[length:3px_100%] bg-center bg-no-repeat [direction:rtl] [writing-mode:vertical-lr] [&::-webkit-slider-thumb]:h-6 [&::-webkit-slider-thumb]:w-3 [&::-webkit-slider-thumb]:appearance-none [&::-webkit-slider-thumb]:rounded-xs ${size} ${
        green
          ? 'bg-[linear-gradient(#26323a_22%,#b2e85a_22%)] [&::-webkit-slider-thumb]:bg-[linear-gradient(#c8ff5a_0,#a4e83c_48%,#4e8518_54%,#86cf2c_62%,#4b7d1c_74%,#8ed92f)]'
          : 'bg-[linear-gradient(#26323a,#26323a)] [&::-webkit-slider-thumb]:bg-[linear-gradient(#eceef2_0,#b9bbc4_48%,#50525a_54%,#a0a2ab_62%,#5b5d66_76%,#b2b4bc)]'
      }`}
    />
  );
}

interface StripProps {
  name: string;
  number: string;
  head: string;
  body: string;
  icon: string;
  linked?: boolean;
  master?: boolean;
}

function Strip({ name, number, head, body, icon, linked, master }: StripProps) {
  return (
    <div className={`flex w-11 shrink-0 flex-col border-r border-black/10 ${body} ${icon}`}>
      <div className={`h-[17px] text-center text-base leading-[17px] ${head}`}>{number}</div>
      <div className="flex h-[67px] items-end pb-[2px]">
        <span className={`w-6 rotate-180 text-[13px] leading-6 whitespace-nowrap [writing-mode:vertical-rl] ${linked && !master ? '' : 'text-[#939fa5]'}`}>{name}</span>
        <span className={master ? 'flex h-[62px] w-4 items-start gap-px border-2 border-[#c2f23c] bg-[#3f5a3a] pt-3' : 'h-[60px] w-[14px] border border-[#1f2b33] bg-[#47535b]/60'}>
          {master && (
            <>
              <span className="h-[2px] flex-1 bg-[#eab54e]" />
              <span className="mt-[2px] h-[2px] flex-1 bg-[#eab54e]" />
            </>
          )}
        </span>
      </div>
      <div className="flex h-[22px] items-center justify-center bg-black/15">
        <Led label={`Mute ${name}`} />
      </div>
      <div className="flex h-[37px] items-center justify-center bg-gradient-to-b from-black/25 from-50% to-transparent to-50%">
        <Knob size="size-7" ring="#333e46" />
      </div>
      <div className="flex h-[163px]">
        <div className="flex w-6 flex-col items-center">
          <Glyph className="my-1 size-3"><path d="M12 0l10 10H2zM12 24l10-10H2z" /></Glyph>
          <Glyph className="my-px size-[14px]"><path d="M0 12L10 2v20zM24 12L14 2v20z" /></Glyph>
          <span className="my-[2px] flex"><Knob size="size-4" ring="#3a464e" /></span>
          <PlugGlyph className={`mt-[52px] size-4 ${linked ? 'text-[#ffd83f]' : 'text-[#66727a]'}`} />
          <Clock className={`mt-[5px] size-[14px] ${master ? 'text-[#f4c04d]' : ''}`} strokeWidth={3} />
          <span className="mt-[9px] size-[6px] rounded-full bg-current" />
        </div>
        <div className="pt-[7px]">
          <Fader label={`${name} level`} value={85} size="h-[148px] w-4" green={master} />
        </div>
      </div>
      <div className="flex flex-1 flex-col items-center gap-2">
        {master ? (
          <>
            <Glyph className="mt-3 size-2"><path d="M2 17L12 7l10 10" fill="none" stroke="currentColor" strokeWidth="4" /></Glyph>
            <Glyph className="size-3 text-[#b9f23c]"><path d="M7 0h10v11h7L12 24 0 11h7z" /></Glyph>
          </>
        ) : (
          <Glyph className="mt-7 size-3 opacity-25"><path d="M2 17L12 7l10 10M8 18h8" fill="none" stroke="currentColor" strokeWidth="3" /></Glyph>
        )}
      </div>
    </div>
  );
}

function EffectRack() {
  const slots = ['FabFilter Pro-C', 'Slot 2', 'Slot 3', 'Slot 4', 'Slot 5', 'Slot 6', 'Slot 7', 'Slot 8', 'FabFilter Pro-L', 'Youlean Loudness Meter'];
  return (
    <div className="flex w-[221px] shrink-0 flex-col border-r-[3px] border-[#5a656c] bg-[#68737a] text-[#e9eff2]">
      <div className="flex h-[30px] items-center gap-2 pl-1">
        <Glyph className="size-4 text-[#414c53]"><path d="M0 9h7V3l9 9-9 9v-6H0zM16 2c8 4 8 16 0 20l-1-3c5-3 5-11 0-14z" /></Glyph>
        <PickBox label="Mixer input" value="(none)" width="w-[159px]" />
        <Clock className="size-[18px] text-[#b7c1c6]" strokeWidth={2.5} />
      </div>
      <ul>
        {slots.map((slot) => {
          const empty = slot.startsWith('Slot');
          return (
            <li key={slot} className={`flex h-[19px] items-center border-t border-[#49545b] pr-[3px] pl-[6px] text-[13px] ${empty ? 'bg-[#626d74]' : 'bg-[#566168]'}`}>
              <Tri />
              <span className={empty ? 'ml-1 text-[#89949a] italic' : 'ml-1'}>{slot}</span>
              <span className="mr-1 ml-auto flex">
                <Knob size="size-[17px]" ring={empty ? '#98a4aa' : '#f3f7f9'} />
              </span>
              <Led label={`Enable ${slot}`} />
            </li>
          );
        })}
      </ul>
      <div className="flex items-center gap-2 border-t border-[#49545b] px-[3px] pt-3 pb-[10px]">
        <div className="flex h-[74px] w-[145px] items-center border border-[#4a555c]">
          <div className="h-[2px] w-full bg-[#e8eef1]" />
        </div>
        <div className="flex gap-[6px]">
          {['Low', 'Mid', 'High'].map((band) => (
            <Fader key={band} label={`${band} band`} value={50} size="h-[74px] w-4" />
          ))}
        </div>
      </div>
      <div className="flex h-[32px] items-center gap-2 border-t border-[#49545b] px-1 font-['Open_Sans',sans-serif] text-[11px]">
        <Clock className="size-[18px] text-[#f5c451]" strokeWidth={2.5} />
        (none)
        <Tri className="ml-auto size-2 text-[#a9b4ba]" />
      </div>
      <div className="flex h-[31px] items-center gap-2 border-t border-[#49545b] px-1">
        <Glyph className="size-4 text-[#414c53]"><path d="M10 2C0 3 0 21 10 22v-3C4 18 4 6 10 5zM9 8h7V3l8 9-8 9v-5H9z" /></Glyph>
        <PickBox label="Mixer output" value="Out 1 - Out 2" width="w-[188px]" />
      </div>
    </div>
  );
}

function Mixer() {
  return (
    <section className="relative border-x-4 border-t border-[#3d4950] bg-[#47535a]">
      <div className="flex h-[27px] items-center pt-px pl-2 font-['Open_Sans',sans-serif] text-xs text-[#97a3a9]">
        <Tri className="size-3" />
        <h2 className="ml-2 text-[11px]">Mixer - Master</h2>
        <div className="ml-auto flex items-center gap-[6px] pr-[5px]">
          <HandGlyph className="size-4" />
          <Glyph className="size-4"><path d="M10 1h4v6h4l-6 6-6-6h4zM3 17h18v3H3z" /></Glyph>
          <Glyph className="size-4 text-[#6c9dc2]"><path d="M1 3l8 6v6l-8 6zM23 3l-8 6v6l8 6zM9 11h6v2H9z" /></Glyph>
          <Glyph className="size-4 text-[#dba94c]"><path d="M2 3h20v18H2zM16 3v18M19 3v18" fill="none" stroke="currentColor" strokeWidth="3" /></Glyph>
          <span className="ml-1">Wide</span>
          <Tri className="mr-4 ml-8 size-[6px]" />
          <span className="mb-1 h-[2px] w-2 bg-current" />
          <span className="mx-1 h-2 w-[10px] border border-t-2 border-current" />
          <Glyph className="size-[10px]"><path d="M2 2l20 20M22 2L2 22" stroke="currentColor" strokeWidth="3" /></Glyph>
        </div>
      </div>
      <div className="flex border-t border-[#26323a] pl-[2px]">
        <EffectRack />
        <div className="ml-[5px] flex min-w-0 flex-1 border-l border-[#26323a] bg-[#3a464e]">
          <div className="flex w-11 shrink-0 flex-col items-center text-[#66727a]">
            <div className="h-[17px] w-full bg-[#6b767d] text-center text-base leading-[17px] text-[#3f4a51]">C</div>
            <div className="mt-[5px] flex h-[220px] w-[27px] flex-col justify-between border border-[#1f2b33] bg-[repeating-linear-gradient(#36434b_0,#36434b_14px,#44515a_14px,#44515a_16px)]">
              <div className="flex pt-[39px]">
                <span className="h-[2px] w-1/2 bg-[#e9ae4a]" />
                <span className="mt-3 h-[2px] w-1/2 bg-[#d8c04a]" />
              </div>
              <span className="h-[2px] bg-[#6fae4c]" />
            </div>
            <PlugGlyph className="mt-[9px] size-4" />
            <span className="mt-[30px] size-[6px] rounded-full bg-[#d5dde1]" />
          </div>
          <Strip name="Master" number="M" head="bg-[#6b767d] font-bold text-white" body="bg-[#47535a]" icon="text-[#c4ced3]" linked master />
          <div className="w-[10px] shrink-0 border-x border-[#1c282f] bg-[#2b373f]" />
          <div className="relative flex min-w-0 flex-1 overflow-hidden">
            {Array.from({ length: 31 }, (_, i) => {
              const n = i + 1;
              const color = stripColors[n] ?? { head: 'bg-[#6a777d] text-[#2f3a41]', body: 'bg-[#3a464e]', icon: 'text-[#c6d0d5]' };
              return <Strip key={n} name={stripNames[i] ?? `Insert ${n}`} number={String(n)} linked={n < 7} {...color} />;
            })}
            <div className="absolute bottom-2 left-[19px] h-[3px] w-[22px] bg-[#17210c]" />
          </div>
          <div className="w-[10px] shrink-0 border-x border-[#1c282f] bg-[#2b373f]" />
        </div>
      </div>
      <div className="h-[6px] border-t border-[#26323a]" />
      <FlexSynth />
      <div className="absolute right-[36px] bottom-[39px] flex size-[120px] items-center justify-center rounded-full bg-[#851c22]/90 font-['Liberation_Sans',sans-serif] text-2xl font-bold text-[#c3bcbd]">
        Educator<span className="mb-2 text-[8px]">®</span>
      </div>
    </section>
  );
}

function SynthKnob({ label, value, angle }: { label: string; value: string; angle: number }) {
  return (
    <div className="flex w-[46px] shrink-0 flex-col items-center text-[11px]">
      <span className="whitespace-nowrap text-[#dde3e8]">{value}</span>
      <svg viewBox="0 0 40 40" className="my-[3px] size-9" aria-hidden="true">
        <circle cx="20" cy="20" r="18" fill="#090c0f" stroke="#25292d" strokeWidth="2" />
        <circle cx="20" cy="20" r="13" fill="#33383d" />
        <path d="M20 8v7" stroke="#fff" strokeWidth="2.500" transform={`rotate(${angle} 20 20)`} />
        <path d="M4 37h2M34 37h2" stroke="#aaa" strokeWidth="2" />
      </svg>
      <span className="text-[10px] leading-4 font-bold text-white">{label}</span>
    </div>
  );
}

function Check({ label, on }: { label: string; on?: boolean }) {
  return (
    <label className="flex h-[19px] items-center gap-[6px] text-[10px] font-bold text-white">
      <input type="checkbox" defaultChecked={on} className="size-[9px] appearance-none border border-[#33393e] bg-[#15191c] checked:border-[#4a75c9] checked:bg-[#e3edff]" />
      {label}
    </label>
  );
}

function Stepper({ value, label }: { value: string; label: string }) {
  return (
    <button type="button" aria-label={label} className="flex h-[19px] w-9 items-center justify-end gap-1 border border-[#1d2226] bg-[#050607] pr-1 text-[11px] text-white">
      {value}
      <Glyph className="size-[10px]"><path d="M12 0l8 9H4zM12 24l8-9H4z" /></Glyph>
    </button>
  );
}

function Keys() {
  const blacks = [15.7, 36.7, 66.7, 85.7, 104.7];
  return (
    <svg viewBox="0 0 595 72" preserveAspectRatio="none" className="h-[72px] min-w-0 flex-1" aria-hidden="true">
      <defs>
        <linearGradient id="ivory" x1="0" y1="0" x2="0" y2="1">
          <stop offset="0" stopColor="#b9bcc0" />
          <stop offset="0.200" stopColor="#fdfdfd" />
          <stop offset="1" stopColor="#e0e2e3" />
        </linearGradient>
        <linearGradient id="ebony">
          <stop offset="0" stopColor="#111" />
          <stop offset="0.500" stopColor="#3a3c3e" />
          <stop offset="1" stopColor="#141414" />
        </linearGradient>
      </defs>
      <rect width="595" height="72" fill="#08090a" />
      <rect width="595" height="2" fill="#3583b8" />
      {Array.from({ length: 35 }, (_, key) => (
        <rect key={key} x={key * 17 + 0.5} y="4" width="16" height="67" rx="1" fill="url(#ivory)" />
      ))}
      {[0, 1, 2, 3, 4].map((octave) =>
        blacks.map((x) => (
          <rect key={`${octave}-${x}`} x={octave * 119 + x - 5} y="4" width="10" height="44" fill="url(#ebony)" stroke="#060606" />
        )),
      )}
    </svg>
  );
}

function FlexSynth() {
  return (
    <div className="absolute top-0 left-[495px] w-[906px] border-4 border-t-0 border-[#4a575d] bg-[#0b0e11] font-['Open_Sans',sans-serif]">
      <div className="flex h-[85px] border-b-2 border-black pl-[2px] text-[11px]">
        <div className="w-[74px] shrink-0 border-r-2 border-black bg-[#111518] pt-8 pl-[3px]">
          <svg viewBox="0 0 40 40" className="size-9" aria-hidden="true">
            <circle cx="20" cy="20" r="18" fill="#090c0f" stroke="#25292d" strokeWidth="2" />
            <circle cx="20" cy="20" r="13" fill="#33383d" />
            <path d="M20 8v7" stroke="#fff" strokeWidth="2.500" transform="rotate(-130 20 20)" />
          </svg>
        </div>
        <div className="flex w-[302px] shrink-0 gap-1 border-r-2 border-black bg-gradient-to-b from-[#151d23] to-[#0d1013] pt-1 pl-[10px]">
          <SynthKnob label="ATTACK" value="308 ms" angle={-25} />
          <SynthKnob label="HOLD" value="0.0 ms" angle={-130} />
          <span className="w-[13px]" />
          <SynthKnob label="DECAY" value="402 ms" angle={-20} />
          <SynthKnob label="SUSTAIN" value="0.0 dB" angle={130} />
          <span className="w-[13px]" />
          <SynthKnob label="RELEASE" value="245 ms" angle={-35} />
        </div>
        <div className="flex w-[56px] shrink-0 flex-col items-center border-r-2 border-black bg-[#0f1317] pt-1">
          <button type="button" aria-label="Open preset" className="flex h-[22px] w-9 items-center justify-center border border-black bg-[#3a3e42] text-white">
            <Glyph className="size-4"><path d="M2 4h8l2 3h8v3H7L3 19H2zM8 11h15l-3 9H5z" /></Glyph>
          </button>
          <span className="mt-3 mb-[2px]"><Stepper value="8" label="Grid size" /></span>
          <span className="text-[10px] leading-4 font-bold text-white">GRID</span>
        </div>
        <div className="w-[54px] shrink-0 border-r-2 border-black bg-[#0f1317] pt-[3px] pl-[7px]">
          <Check label="TRIG" on />
          <Check label="ENV" />
          <Check label="OFF" />
          <span className="block pl-1 text-[10px] leading-[19px] font-bold text-white">MODE</span>
        </div>
        <div className="flex w-[260px] shrink-0 border-r-2 border-black bg-gradient-to-b from-[#151d23] to-[#0d1013] pt-[3px] pl-[8px]">
          <div className="w-[47px] shrink-0">
            <Check label="BPM" on />
            <Check label="ANCH" on />
            <Check label="TRIP" />
            <Check label="DOT" />
          </div>
          <SynthKnob label="RATE" value="1/8" angle={20} />
          <SynthKnob label="RISE" value="1/4" angle={8} />
          <SynthKnob label="DELAY" value="Off" angle={-130} />
          <span className="w-[11px]" />
          <SynthKnob label="SMOOTH" value="7.9" angle={-110} />
        </div>
        <div className="flex-1 bg-[#0f1317] px-[6px] pt-1 text-white">
          <h3 className="mb-[14px] h-[18px] bg-[#191d21] px-2 font-['Open_Sans_Condensed','Open_Sans',sans-serif] text-[13px] leading-[18px] font-bold">VOICING</h3>
          <div className="flex h-[22px] items-center gap-2 pl-2">
            <Check label="MONO" />
            <span className="ml-auto text-[10px] font-bold">POLY</span>
            <Stepper value="32" label="Polyphony" />
          </div>
          <div className="flex h-[22px] items-center pl-2">
            <Check label="LEGATO" />
            <span className="ml-auto flex h-4 w-16 items-center justify-center gap-3 bg-[#191d21]">
              <span>0</span>
              <span>/416</span>
            </span>
          </div>
        </div>
      </div>
      <div className="flex h-[87px] items-center pl-[2px]">
        <div className="flex h-full w-[151px] items-center border-x-[13px] border-[#1b1f22] bg-[#0a0b0c] pt-1 pl-3">
          <div className="flex flex-col gap-[9px]">
            <Stepper value="2" label="Bend up" />
            <Stepper value="-2" label="Bend down" />
          </div>
          <span className="ml-4 h-14 w-4 bg-[repeating-linear-gradient(#060606_0,#060606_2px,#1d1f20_2px,#1d1f20_4px)]" />
          <span className="ml-2 h-14 w-[18px] bg-[repeating-linear-gradient(#060606_0,#060606_2px,#151718_2px,#151718_4px)]" />
        </div>
        <Keys />
        <div className="flex h-full w-[150px] flex-col border-x-[13px] border-[#1b1f22] bg-[#050708] pt-[5px] pr-[5px] pl-[10px] text-[10px] font-bold text-white">
          <div className="flex justify-between">
            <Check label="ALWAYS" />
            <Check label="SCALED" on />
          </div>
          <div className="flex items-center justify-between py-[5px] pr-4 pl-2">
            <Knob size="size-[29px]" angle={-50} ring="#15191c" />
            <span className="h-px w-3 bg-[#25292d]" />
            <svg viewBox="0 0 26 26" className="size-[26px]" aria-hidden="true">
              <rect width="26" height="26" fill="#05080c" />
              <path d="M1 26C1 10 8 1 25 1V26Z" fill="#1a5290" />
              <path d="M1 26C1 10 8 1 25 1" fill="none" stroke="#5aa6ef" strokeWidth="1.500" />
            </svg>
          </div>
          <div className="flex justify-between pr-3 pl-1">
            <span>PORTA</span>
            <span>CURVE</span>
          </div>
        </div>
      </div>
    </div>
  );
}

export default function App() {
  return (
    <div className="flex min-h-screen flex-col overflow-hidden bg-[#3d4950] font-['Roboto_Condensed','Roboto',sans-serif]">
      <TopBar />
      <main className="flex flex-1">
        <Browser />
        <div className="w-[9px] shrink-0 border-r border-[#26323a] bg-[#414d54]" />
        <div className="flex min-w-0 flex-1 flex-col">
          <div className="flex">
            <ChannelRack />
            <Playlist />
          </div>
          <Mixer />
        </div>
      </main>
    </div>
  );
}
